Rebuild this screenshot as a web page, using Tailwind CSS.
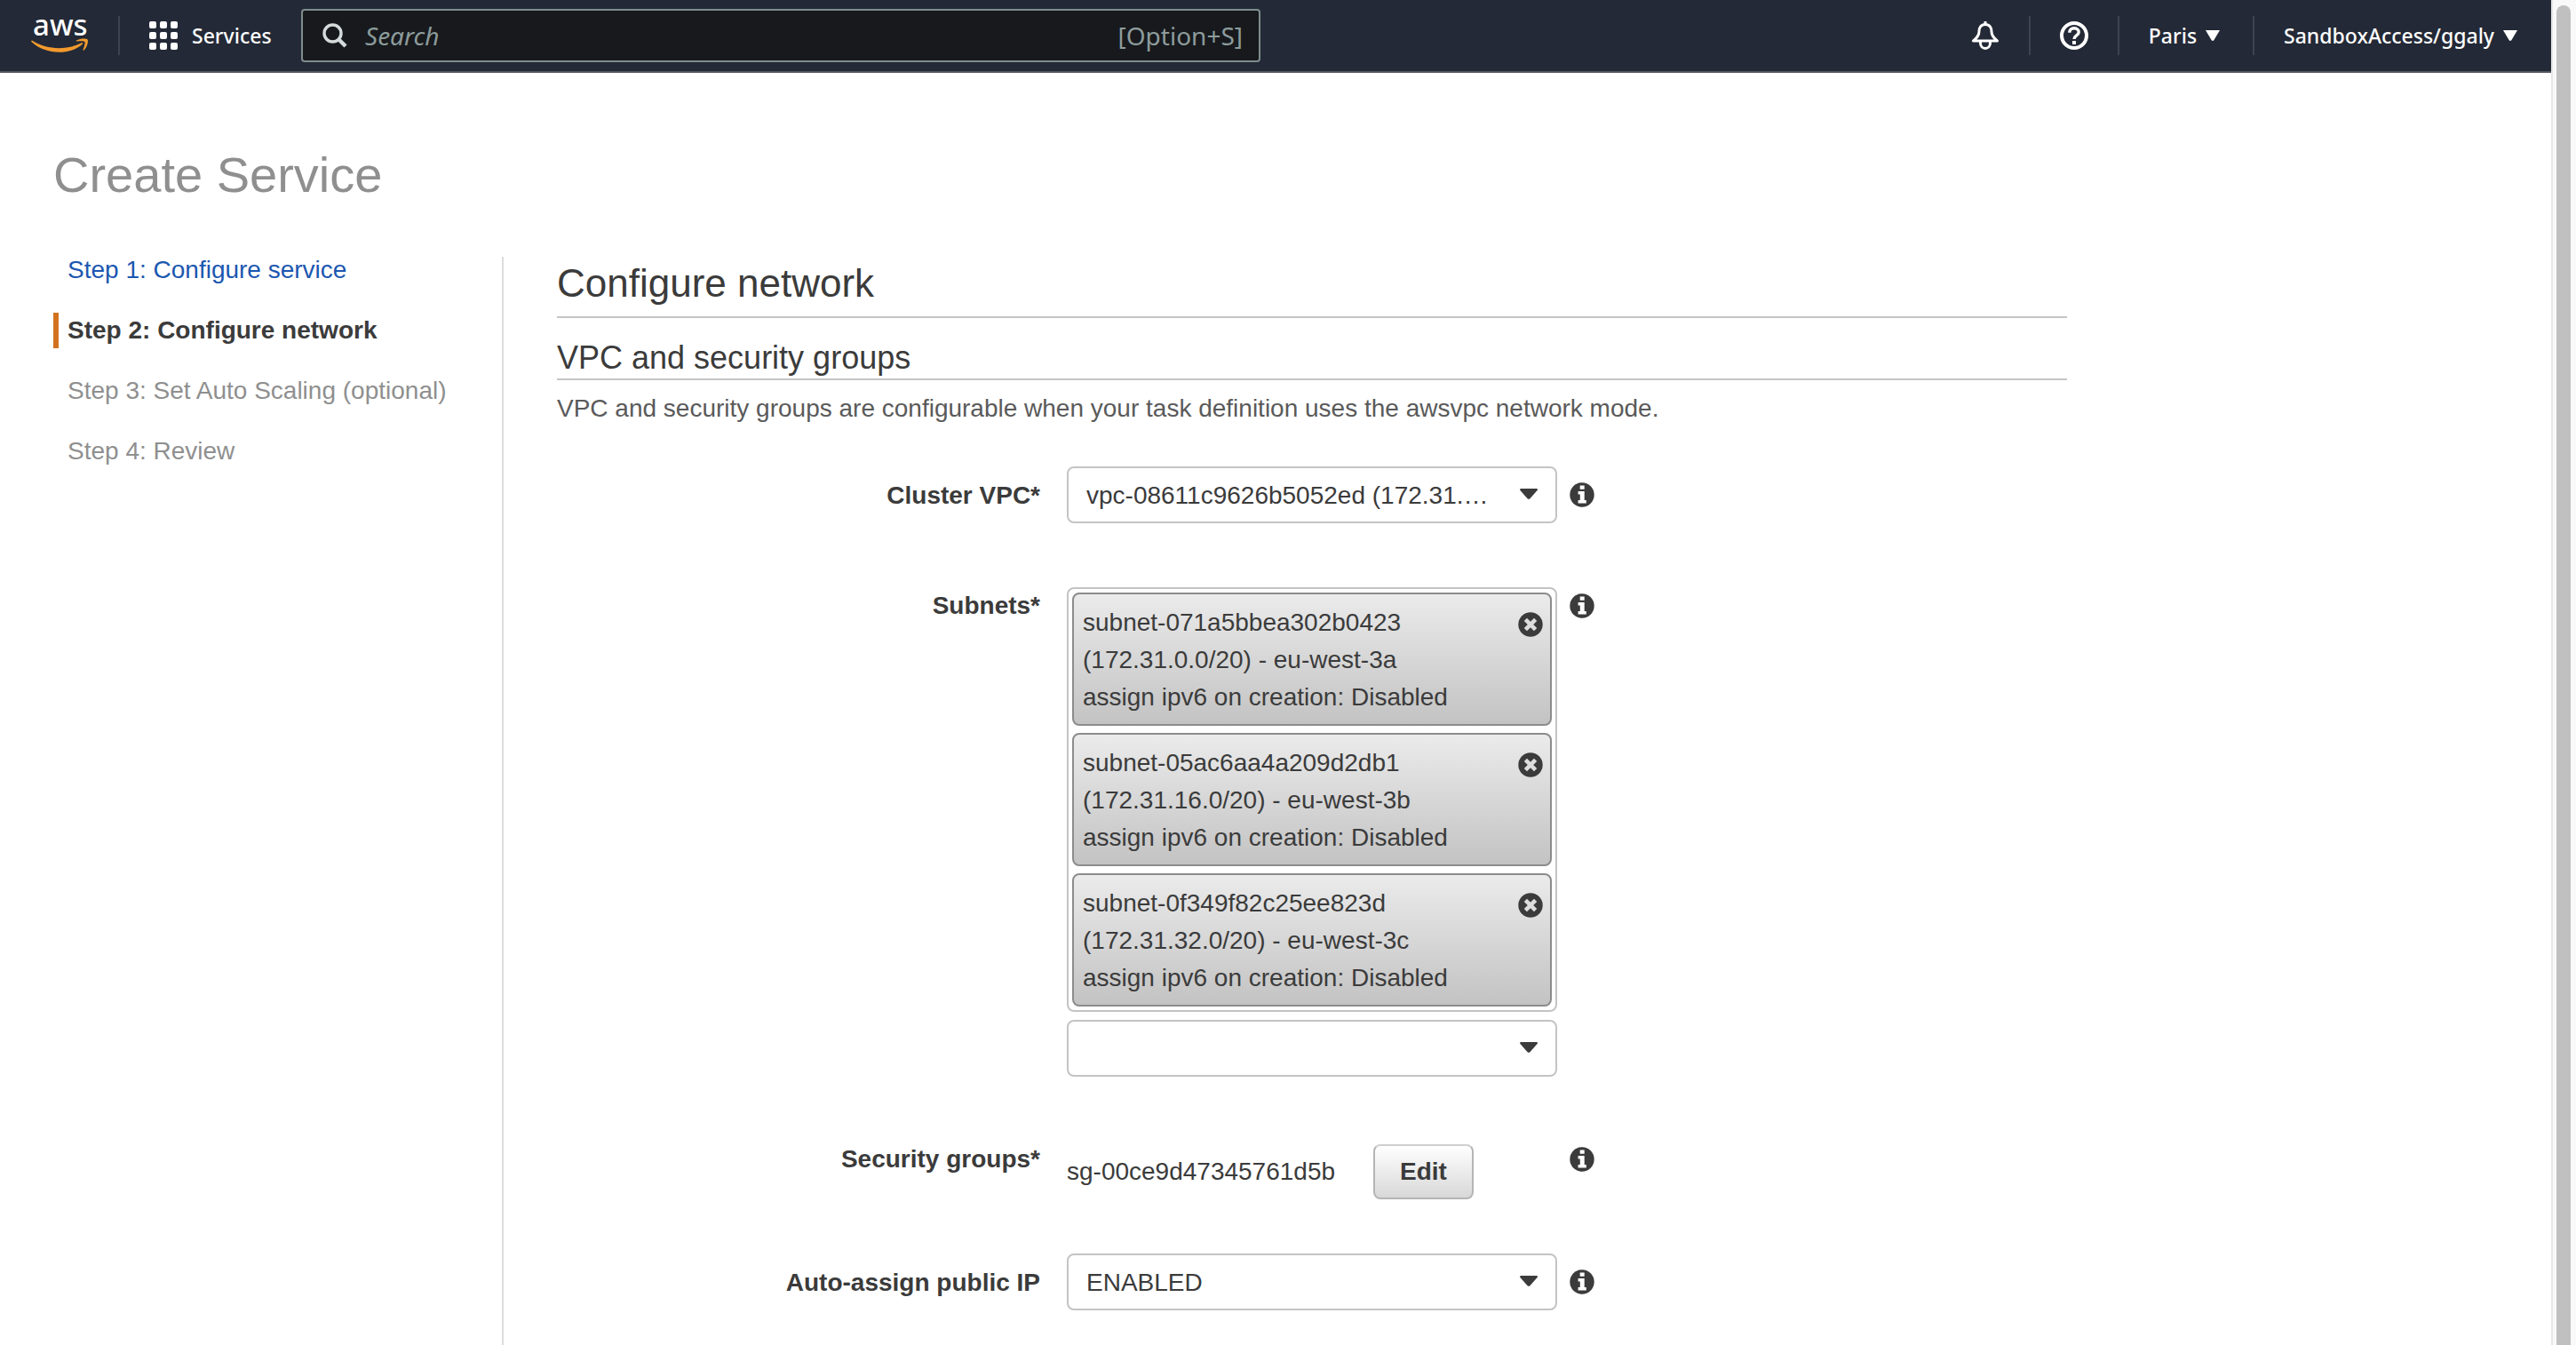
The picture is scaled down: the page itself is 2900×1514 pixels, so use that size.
<!DOCTYPE html>
<html lang="en">
<head>
<meta charset="utf-8">
<title>Create Service</title>
<script src="https://cdn.jsdelivr.net/npm/@tailwindcss/browser@4"></script>
</head>
<body class="flex min-h-screen bg-white font-['Helvetica_Neue','Liberation_Sans',Arial,sans-serif] text-[28px] leading-10 text-[#3b3b3b]">
<svg class="hidden">
  <symbol id="info" viewBox="0 0 28 28">
    <circle cx="14" cy="14" r="13.7" fill="#3b3b3b"/>
    <path fill="#fff" d="M11.7 3.6h5v4.2h-5zM9.6 10h7.1v10h2.1v3.4H9.6V20h2.2v-6.6H9.6z"/>
  </symbol>
  <symbol id="remove" viewBox="0 0 28 28">
    <circle cx="14" cy="14" r="13.7" fill="#3b3b3b"/>
    <path stroke="#ddd" stroke-width="4.6" d="M8.4 8.4l11.2 11.2M19.6 8.4L8.4 19.6"/>
  </symbol>
  <symbol id="caret" viewBox="0 0 20 12">
    <path fill="#3b3b3b" d="M1 0h18q1.600 .4.600 2L11.400 11.200q-1.400 1.200-2.800 0L.4 2Q-.4.400 1 0z"/>
  </symbol>
</svg>

<div class="flex min-w-0 flex-1 flex-col">
  <header class="flex h-[82px] items-center border-b-2 border-[#54555f] bg-[#232936] pr-[38px] pl-[35px] font-['Noto_Sans',sans-serif] text-[23px] font-medium text-white">
    <a href="#" aria-label="AWS home" class="shrink-0">
      <svg class="h-20 w-16 overflow-visible" viewBox="0 -20 64 80">
        <text x="2" y="20" font-size="33" fill="#fff">aws</text>
        <path fill="#f29a2e" d="M1 25.500C17 36 40 37 57 28.200q2-.6 1 1.200C44 42.500 16 42 .400 27q-.8-1.500.6-1.500z"/>
        <path fill="#f29a2e" d="M51 25.600c4-2.600 11-2.600 12.600-1.200 1.200 1.600-.4 8.600-4 12-1 .6-1.400.1-1-.8 1.200-3 2.600-7.400 1.800-8.600s-5.400-.8-8.600-.4c-1 0-1.400-.5-.8-1z"/>
      </svg>
    </a>
    <span class="mr-[33px] ml-[34px] h-11 w-0.5 bg-[#3d434f]"></span>
    <button type="button" class="flex w-[171px] shrink-0 items-center gap-4">
      <svg class="size-8" viewBox="0 0 32 32" fill="#fff">
        <rect width="8" height="8" rx="2"/><rect x="12" width="8" height="8" rx="2"/><rect x="24" width="8" height="8" rx="2"/>
        <rect y="12" width="8" height="8" rx="2"/><rect x="12" y="12" width="8" height="8" rx="2"/><rect x="24" y="12" width="8" height="8" rx="2"/>
        <rect y="24" width="8" height="8" rx="2"/><rect x="12" y="24" width="8" height="8" rx="2"/><rect x="24" y="24" width="8" height="8" rx="2"/>
      </svg>
      Services
    </button>
    <form class="flex h-[60px] min-w-0 max-w-[1080px] flex-1 items-center rounded border-2 border-[#7f8d8c] bg-[#17191d] pr-[18px] pl-[22px] text-[28px] font-normal text-[#8d9c9b]">
      <svg class="size-7 shrink-0" viewBox="0 0 28 28" fill="none" stroke="#d5dbdb">
        <circle cx="11.500" cy="11.500" r="9.500" stroke-width="3.400"/><path stroke-width="4.400" d="M18 18l8 8"/>
      </svg>
      <input type="search" aria-label="Search" placeholder="Search" class="ml-5 min-w-0 flex-1 bg-transparent italic placeholder:text-[#8d9c9b]">
      <kbd class="font-['Noto_Sans',sans-serif] text-[28px]">[Option+S]</kbd>
    </form>
    <div class="ml-auto flex shrink-0 items-center">
      <button type="button" aria-label="Notifications">
        <svg class="size-8" viewBox="0 0 32 32" fill="none" stroke="#fff" stroke-width="3" stroke-linejoin="round">
          <path d="M16 3.500c-5 0-7 4-7 8 0 5-3 7.500-6.500 10.500h27C26 19 23 16.500 23 11.500c0-4-2-8-7-8zM16 0v4M10.500 22v2.500c0 3.500 2.500 6 5.500 6s5.500-2.500 5.500-6V22"/>
        </svg>
      </button>
      <span class="mx-[33px] h-11 w-0.5 bg-[#3d434f]"></span>
      <button type="button" aria-label="Help">
        <svg class="size-8" viewBox="0 0 32 32" fill="none" stroke="#fff">
          <circle cx="16" cy="16" r="14" stroke-width="4"/>
          <path stroke-width="3.400" d="M10.800 12.800c0-3.200 2.200-5 5.200-5s5.200 1.800 5.200 4.500c0 3.700-5.200 3.700-5.200 7.700"/><path stroke-width="4" d="M16 22v4"/>
        </svg>
      </button>
      <span class="mx-[33px] h-11 w-0.5 bg-[#3d434f]"></span>
      <button type="button" class="flex items-center gap-2.5">Paris
        <svg class="h-3 w-4" viewBox="0 0 16 12"><path fill="#fff" d="M0 0h16L9.500 11q-1.500 2-3 0z"/></svg>
      </button>
      <span class="mr-[33px] ml-[37px] h-11 w-0.5 bg-[#3d434f]"></span>
      <button type="button" class="flex items-center gap-2.5">SandboxAccess/ggaly
        <svg class="h-3 w-4" viewBox="0 0 16 12"><path fill="#fff" d="M0 0h16L9.500 11q-1.500 2-3 0z"/></svg>
      </button>
    </div>
  </header>

  <h1 class="mt-[83px] pl-[60px] text-[56px] leading-[64px] text-[#8f8f8f]">Create Service</h1>

  <div class="mt-[55px] flex flex-1 pl-[60px]">
    <nav aria-label="Steps" class="w-[505px] shrink-0">
      <ol class="flex flex-col gap-7 text-[#8f8f8f]">
        <li class="border-l-[6px] border-transparent pl-[10px]"><a href="#" class="text-[#1b57b0]">Step 1: Configure service</a></li>
        <li aria-current="step" class="border-l-[6px] border-[#d2721e] pl-[10px] font-bold text-[#3b3b3b]">Step 2: Configure network</li>
        <li class="border-l-[6px] border-transparent pl-[10px]">Step 3: Set Auto Scaling (optional)</li>
        <li class="border-l-[6px] border-transparent pl-[10px]">Step 4: Review</li>
      </ol>
    </nav>

    <main class="mt-[5px] min-w-0 flex-1 border-l-2 border-[#dcdcdc] pl-[60px]">
      <div class="max-w-[1700px]">
        <h2 class="border-b-2 border-[#c4c4c4] pb-[7px] text-[44px] leading-[60px]">Configure network</h2>
        <h3 class="mt-[23px] border-b-2 border-[#c4c4c4] pb-px text-[36px] leading-[44px]">VPC and security groups</h3>
        <p class="mt-3 text-[#5a5a5a]">VPC and security groups are configurable when your task definition uses the awsvpc network mode.</p>

        <form>
          <div class="mt-[45px] flex items-start">
            <label for="vpc" class="w-[32%] pt-[13px] text-right font-bold">Cluster VPC*</label>
            <div class="relative ml-[30px] w-[552px]">
              <select id="vpc" class="block h-16 w-full appearance-none rounded-lg border-2 border-[#c4c4c4] bg-white pt-0.5 pr-14 pl-5"><option>vpc-08611c9626b5052ed (172.31.…</option></select>
              <svg class="pointer-events-none absolute top-[25px] right-[22px] h-3 w-5"><use href="#caret"/></svg>
            </div>
            <button type="button" aria-label="About Cluster VPC" class="mt-[18px] ml-3.5"><svg class="size-7"><use href="#info"/></svg></button>
          </div>

          <div class="mt-[72px] flex items-start">
            <label for="subnets" class="w-[32%] pt-px text-right font-bold">Subnets*</label>
            <div class="ml-[30px] w-[552px]">
              <ul class="flex flex-col gap-2 rounded-lg border-2 border-[#c4c4c4] p-1 leading-[42px]">
                <li class="flex items-start justify-between rounded-lg border-2 border-[#8c8c8c] bg-linear-to-b from-[#ebebeb] to-[#c3c3c3] pt-[11px] pr-2 pb-[9px] pl-2.5">
                  <span>subnet-071a5bbea302b0423<br>(172.31.0.0/20) - eu-west-3a<br>assign ipv6 on creation: Disabled</span>
                  <button type="button" aria-label="Remove subnet-071a5bbea302b0423" class="mt-[9px]"><svg class="size-7"><use href="#remove"/></svg></button>
                </li>
                <li class="flex items-start justify-between rounded-lg border-2 border-[#8c8c8c] bg-linear-to-b from-[#ebebeb] to-[#c3c3c3] pt-[11px] pr-2 pb-[9px] pl-2.5">
                  <span>subnet-05ac6aa4a209d2db1<br>(172.31.16.0/20) - eu-west-3b<br>assign ipv6 on creation: Disabled</span>
                  <button type="button" aria-label="Remove subnet-05ac6aa4a209d2db1" class="mt-[9px]"><svg class="size-7"><use href="#remove"/></svg></button>
                </li>
                <li class="flex items-start justify-between rounded-lg border-2 border-[#8c8c8c] bg-linear-to-b from-[#ebebeb] to-[#c3c3c3] pt-[11px] pr-2 pb-[9px] pl-2.5">
                  <span>subnet-0f349f82c25ee823d<br>(172.31.32.0/20) - eu-west-3c<br>assign ipv6 on creation: Disabled</span>
                  <button type="button" aria-label="Remove subnet-0f349f82c25ee823d" class="mt-[9px]"><svg class="size-7"><use href="#remove"/></svg></button>
                </li>
              </ul>
              <div class="relative mt-[9px]">
                <select id="subnets" class="block h-16 w-full appearance-none rounded-lg border-2 border-[#c4c4c4] bg-white pt-0.5 pr-14 pl-5"><option></option></select>
                <svg class="pointer-events-none absolute top-[25px] right-[22px] h-3 w-5"><use href="#caret"/></svg>
              </div>
            </div>
            <button type="button" aria-label="About Subnets" class="mt-[7px] ml-3.5"><svg class="size-7"><use href="#info"/></svg></button>
          </div>

          <div class="mt-[72px] flex items-start">
            <label for="edit-groups" class="w-[32%] pt-px text-right font-bold">Security groups*</label>
            <div class="ml-[30px] flex w-[552px] items-center pt-1">
              <span class="w-[345px]">sg-00ce9d47345761d5b</span>
              <button id="edit-groups" type="button" class="h-[62px] w-[113px] rounded-lg border-2 border-[#b5b5b5] border-t-[#cfcfcf] bg-linear-to-b from-white to-[#d8d8d8] font-bold">Edit</button>
            </div>
            <button type="button" aria-label="About Security groups" class="mt-[7px] ml-3.5"><svg class="size-7"><use href="#info"/></svg></button>
          </div>

          <div class="mt-[61px] flex items-start">
            <label for="public-ip" class="w-[32%] pt-[13px] text-right font-bold">Auto-assign public IP</label>
            <div class="relative ml-[30px] w-[552px]">
              <select id="public-ip" class="block h-16 w-full appearance-none rounded-lg border-2 border-[#c4c4c4] bg-white pt-0.5 pr-14 pl-5"><option>ENABLED</option></select>
              <svg class="pointer-events-none absolute top-[25px] right-[22px] h-3 w-5"><use href="#caret"/></svg>
            </div>
            <button type="button" aria-label="About Auto-assign public IP" class="mt-[18px] ml-3.5"><svg class="size-7"><use href="#info"/></svg></button>
          </div>
        </form>
      </div>
    </main>
  </div>
</div>

<!-- Scroll track -->
<div class="flex w-7 shrink-0 border-l-2 border-[#e6e6e6] bg-[#f9f9f9] pt-1.5 pl-1">
  <div class="w-4 rounded-t-full bg-[#c0c0c0]"></div>
</div>
</body>
</html>
